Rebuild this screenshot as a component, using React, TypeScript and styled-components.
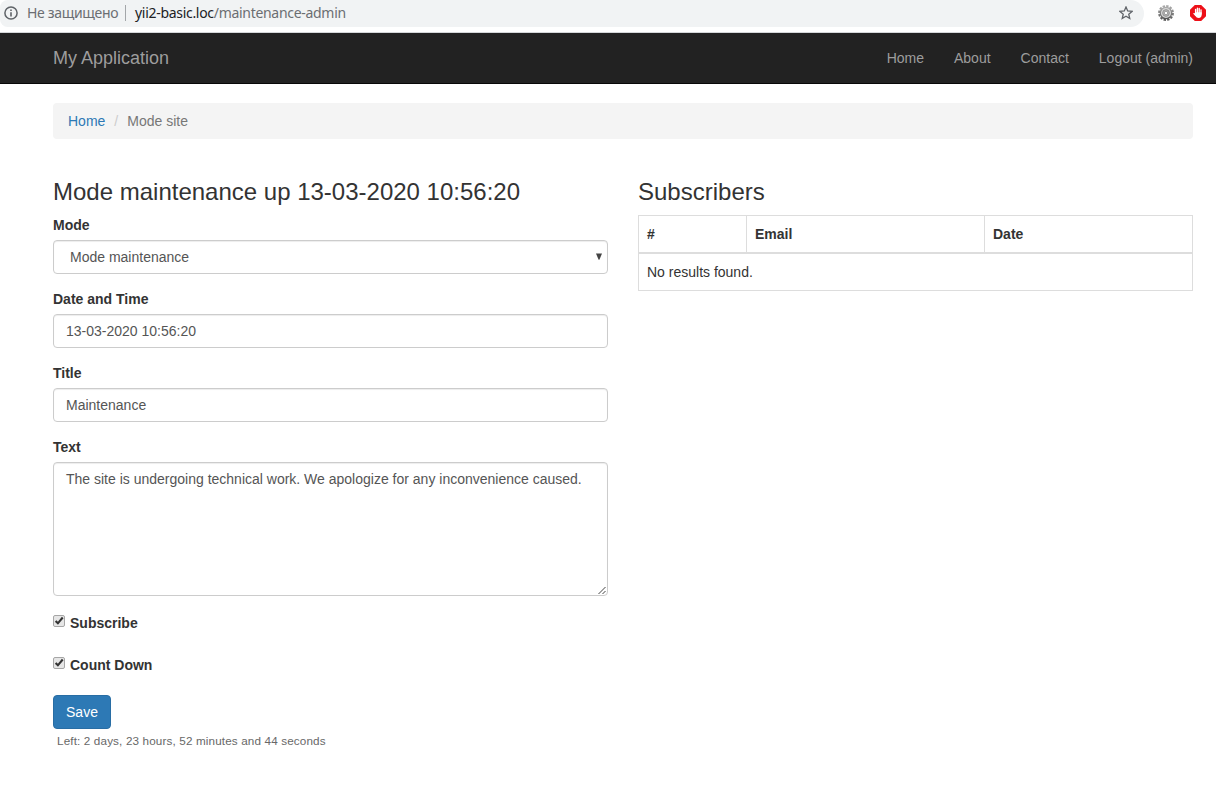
import React from "react";
import styled, { createGlobalStyle } from "styled-components";

const GlobalStyle = createGlobalStyle`
  * { box-sizing: border-box; }
  body {
    margin: 0;
    background: #fff;
    color: #333;
    font: 14px/20px "Liberation Sans", Arial, sans-serif;
    overflow: hidden;
  }
`;

const BrowserBar = styled.div`
  display: flex;
  align-items: flex-start;
  height: 33px;
  border-bottom: 1px solid #d5d7da;
`;

const AddressBar = styled.div`
  display: flex;
  align-items: center;
  width: 1144px;
  height: 27px;
  padding: 0 11px 1px 4px;
  border-radius: 8px 14px 14px 8px;
  background: #f1f3f4;
  color: #6b6e72;
  font: 14px/24px "Noto Sans", "Open Sans", sans-serif;
  white-space: nowrap;
  & > svg { flex: none; }
`;

const Security = styled.span`
  width: 107px;
  padding-left: 9px;
  letter-spacing: -0.33px;
`;

const Separator = styled.i`
  width: 1px;
  height: 16px;
  margin-right: 9px;
  background: #a3a6a9;
`;

const Url = styled.span`
  flex: 1;
  letter-spacing: -0.3px;
`;

const Host = styled.span`
  color: #202124;
`;

const Extensions = styled.div`
  display: flex;
  gap: 16px;
  padding: 5px 0 0 14px;
`;

const Navbar = styled.nav`
  display: flex;
  justify-content: space-between;
  height: 51px;
  padding: 15px 23px 0 53px;
  background: #222;
  border-bottom: 1px solid #080808;
  color: #9d9d9d;
`;

const Brand = styled.span`
  font-size: 18px;
`;

const NavLinks = styled.div`
  display: flex;
  gap: 30px;
`;

const Container = styled.main`
  padding: 19px 23px 0 53px;
`;

const Breadcrumb = styled.div`
  display: flex;
  height: 36px;
  padding: 8px 15px;
  border-radius: 4px;
  background: #f4f4f4;
  color: #777;
`;

const CrumbLink = styled.span`
  color: #2d79b5;
`;

const Slash = styled.span`
  padding: 0 9px;
  color: #ccc;
`;

const Columns = styled.div`
  display: grid;
  grid-template-columns: 555px 555px;
  gap: 30px;
  padding-top: 40px;
`;

const Heading = styled.h3`
  margin: 0 0 10px;
  font-size: 24px;
  font-weight: 400;
  line-height: 26px;
`;

const Group = styled.div`
  margin-bottom: 15px;
`;

const Label = styled.label`
  display: block;
  margin-bottom: 5px;
  font-weight: 700;
`;

const Control = styled.div<{ $height?: number; $indent?: number }>`
  display: flex;
  justify-content: space-between;
  height: ${(p) => p.$height ?? 34}px;
  padding: 6px 0 0 ${(p) => p.$indent ?? 12}px;
  border: 1px solid #ccc;
  border-radius: 4px;
  box-shadow: inset 0 1px 1px rgba(0, 0, 0, 0.075);
  color: #555;
`;

const SelectArrow = styled.svg`
  margin: 6px 5px 0 0;
`;

const Grip = styled.svg`
  align-self: flex-end;
`;

const CheckRow = styled.label`
  display: flex;
  gap: 5px;
  height: 20px;
  margin: 0 0 22px;
  font-weight: 700;
`;

const CheckIcon = styled.svg`
  margin-top: 2px;
`;

const Checks = styled.div`
  padding-top: 2px;
`;

const SaveButton = styled.button`
  display: block;
  width: 58px;
  height: 34px;
  margin-top: -2px;
  padding: 0;
  border: 1px solid #286da4;
  border-radius: 4px;
  background: #2d79b5;
  color: #fff;
  font: inherit;
`;

const TimeLeft = styled.div`
  padding: 2px 0 0 4px;
  color: #686868;
  font-size: 11.7px;
  letter-spacing: 0.14px;
`;

const Table = styled.table`
  width: 555px;
  table-layout: fixed;
  border-collapse: collapse;
  border: 1px solid #ddd;
`;

const Cell = styled.td`
  height: 37px;
  padding: 8px;
  border: 1px solid #ddd;
  text-align: left;
`;

const HeadCell = styled(Cell).attrs({ as: "th" })<{ $width: number }>`
  width: ${(p) => p.$width}px;
  border-bottom-width: 2px;
`;

const InfoIcon = () => (
  <svg width="14" height="14" viewBox="0 0 14 14" fill="none" stroke="#5f6368">
    <circle cx="7" cy="7" r="6.1" strokeWidth="1.5" />
    <path d="M7 3.4v1.6M7 6.2v4.3" strokeWidth="1.6" />
  </svg>
);

const StarIcon = () => (
  <svg width="14" height="14" viewBox="0 0 14 14" fill="none" stroke="#5f6368" strokeWidth="1.3">
    <path d="M7 1l1.7 4 4.4.4-3.35 2.85 1 4.25L7 10.25 3.25 12.5l1-4.25L.9 5.4 5.3 5z" />
  </svg>
);

const GearIcon = () => (
  <svg width="16" height="16" viewBox="0 0 16 16">
    <defs>
      <linearGradient id="metal" x1="0" y1="0" x2="0" y2="1">
        <stop offset="0" stopColor="#aaa" />
        <stop offset="1" stopColor="#555" />
      </linearGradient>
    </defs>
    <circle cx="8" cy="8" r="7" fill="none" stroke="url(#metal)" strokeWidth="1.9" strokeDasharray="2.4 1.265" />
    <circle cx="8" cy="8" r="5.7" fill="#d4d4d4" stroke="url(#metal)" strokeWidth="1.2" />
    <circle cx="8" cy="8" r="3.3" fill="#c6c6c6" stroke="#888" strokeWidth=".9" />
    <circle cx="8" cy="8" r="1.8" fill="#fff" stroke="#777" strokeWidth=".7" />
  </svg>
);

const BlockerIcon = () => (
  <svg width="16" height="16" viewBox="0 0 16 16">
    <path d="M4.8 0h6.4L16 4.8v6.4L11.2 16H4.8L0 11.2V4.8z" fill="#ed1018" />
    <g stroke="#fff" strokeWidth="1.35" strokeLinecap="round" fill="none">
      <path d="M5.6 8V4.3M7.4 8V3.2M9.2 8V3.4M11 9V4.8M4 8.6l1.8 1.8" />
    </g>
    <path d="M5 7.2h6.7v2.3c0 2-1 3.5-3 3.5-1.9 0-2.9-1.1-3.8-3z" fill="#fff" />
  </svg>
);

const Checkbox = () => (
  <CheckIcon width="12" height="12" viewBox="0 0 12 12">
    <rect x=".5" y=".5" width="11" height="11" rx="1.5" fill="#e6e6e6" stroke="#a6a6a6" />
    <path d="M2.6 6l2.3 2.3L9.7 2.5" fill="none" stroke="#333" strokeWidth="2.1" />
  </CheckIcon>
);

export default function App() {
  return (
    <>
      <GlobalStyle />
      <BrowserBar>
        <AddressBar>
          <InfoIcon />
          <Security>Не защищено</Security>
          <Separator />
          <Url><Host>yii2-basic.loc</Host>/maintenance-admin</Url>
          <StarIcon />
        </AddressBar>
        <Extensions>
          <GearIcon />
          <BlockerIcon />
        </Extensions>
      </BrowserBar>
      <Navbar>
        <Brand>My Application</Brand>
        <NavLinks>
          <span>Home</span>
          <span>About</span>
          <span>Contact</span>
          <span>Logout (admin)</span>
        </NavLinks>
      </Navbar>
      <Container>
        <Breadcrumb>
          <CrumbLink>Home</CrumbLink>
          <Slash>/</Slash>
          <span>Mode site</span>
        </Breadcrumb>
        <Columns>
          <section>
            <Heading>Mode maintenance up 13-03-2020 10:56:20</Heading>
            <Group>
              <Label>Mode</Label>
              <Control $indent={16}>
                <span>Mode maintenance</span>
                <SelectArrow width="6" height="7" viewBox="0 0 6 7">
                  <path d="M0 .5h6L3.4 6.7h-.8z" fill="#444" />
                </SelectArrow>
              </Control>
            </Group>
            <Group>
              <Label>Date and Time</Label>
              <Control>13-03-2020 10:56:20</Control>
            </Group>
            <Group>
              <Label>Title</Label>
              <Control>Maintenance</Control>
            </Group>
            <Group>
              <Label>Text</Label>
              <Control $height={134}>
                <span>The site is undergoing technical work. We apologize for any inconvenience caused.</span>
                <Grip width="9" height="9" viewBox="0 0 9 9" stroke="#444" strokeWidth="1">
                  <path d="M.5 8L7.5 1M4.5 8L7.5 5" />
                </Grip>
              </Control>
            </Group>
            <Checks>
              <CheckRow><Checkbox />Subscribe</CheckRow>
              <CheckRow><Checkbox />Count Down</CheckRow>
            </Checks>
            <SaveButton>Save</SaveButton>
            <TimeLeft>Left: 2 days, 23 hours, 52 minutes and 44 seconds</TimeLeft>
          </section>
          <section>
            <Heading>Subscribers</Heading>
            <Table>
              <thead>
                <tr>
                  <HeadCell $width={108}>#</HeadCell>
                  <HeadCell $width={238}>Email</HeadCell>
                  <HeadCell $width={208}>Date</HeadCell>
                </tr>
              </thead>
              <tbody>
                <tr><Cell colSpan={3}>No results found.</Cell></tr>
              </tbody>
            </Table>
          </section>
        </Columns>
      </Container>
    </>
  );
}
